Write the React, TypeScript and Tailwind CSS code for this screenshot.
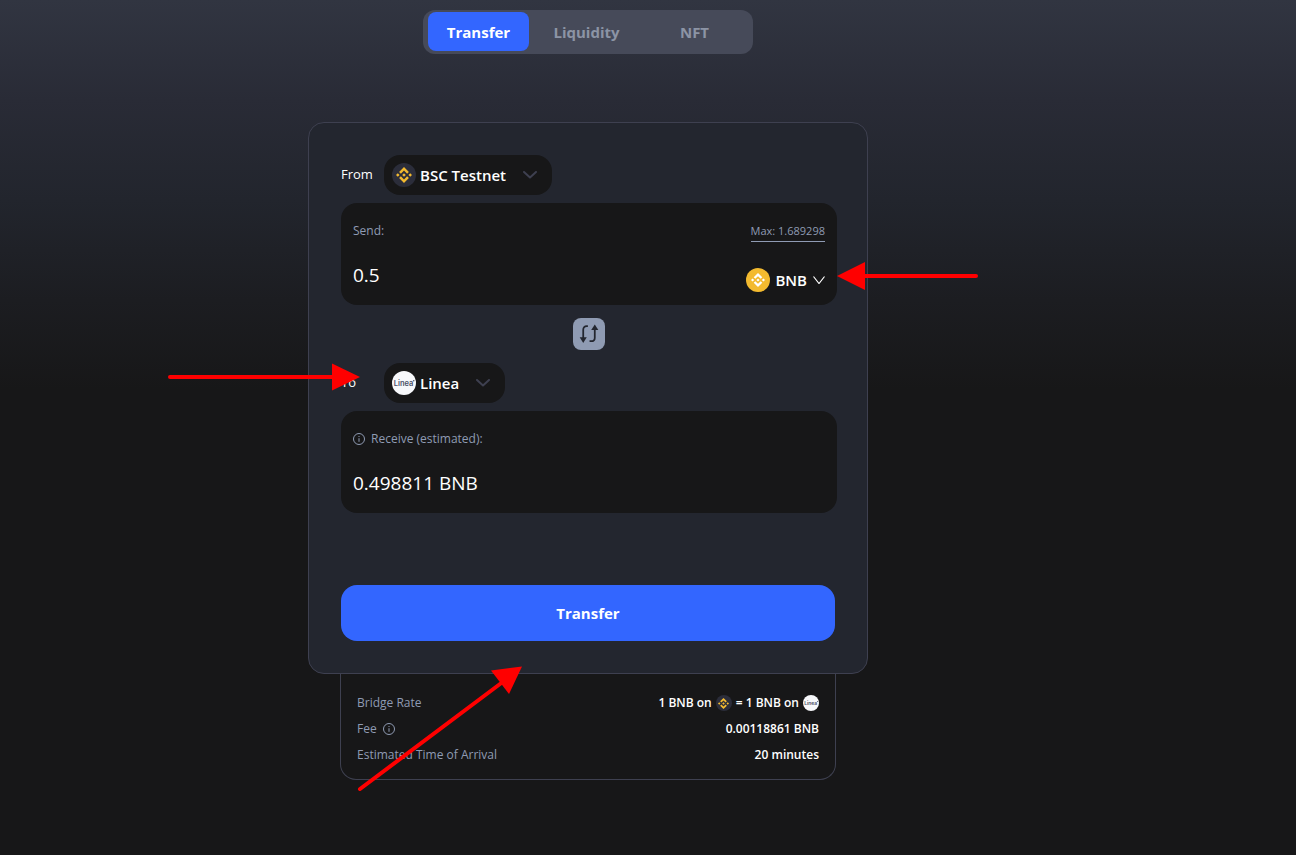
import { useState } from "react";

interface IconProps {
  className?: string;
}

const TABS = ["Transfer", "Liquidity", "NFT"];

function BnbMark({ className }: IconProps) {
  return (
    <svg className={className} viewBox="0 0 16 16" fill="currentColor" aria-hidden="true">
      <path d="M4.9 6.7 8 3.6l3.1 3.1 1.8-1.8L8 0 3.1 4.9z" />
      <path d="M4.9 9.3 8 12.4l3.1-3.1 1.8 1.8L8 16l-4.9-4.9z" />
      <path d="M0 8l1.8-1.8L3.6 8 1.8 9.8zM12.4 8l1.8-1.8L16 8l-1.8 1.8z" />
      <path d="M6.2 8 8 6.2 9.8 8 8 9.8z" />
    </svg>
  );
}

function BscLogo({ small }: { small?: boolean }) {
  return (
    <span className={`flex items-center justify-center rounded-full bg-[#2b2d3a] text-[#f3ba2f] ${small ? "size-4" : "size-6"}`}>
      <BnbMark className={small ? "size-[11px]" : "size-4"} />
    </span>
  );
}

function LineaLogo({ className }: IconProps) {
  return (
    <svg className={className} viewBox="0 0 24 24" role="img" aria-label="Linea">
      <circle cx="12" cy="12" r="12" fill="#f7f8fb" />
      <text x="11.5" y="14.5" textAnchor="middle" fontSize="7.5" fontWeight="600" fill="#4a5068" fontFamily="Inter, sans-serif">
        Linea
      </text>
      <circle cx="21.7" cy="9.8" r="0.8" fill="#4a5068" />
    </svg>
  );
}

function Chevron({ className }: IconProps) {
  return (
    <svg className={className} viewBox="0 0 14 8" fill="none" stroke="currentColor" aria-hidden="true">
      <path d="M1 1l6 5.5L13 1" strokeLinecap="round" strokeLinejoin="round" />
    </svg>
  );
}

function InfoIcon() {
  return (
    <svg className="size-3 shrink-0" viewBox="0 0 12 12" fill="none" stroke="currentColor" aria-hidden="true">
      <circle cx="6" cy="6" r="5.5" />
      <path d="M6 5.2v3.6M6 3v1" />
    </svg>
  );
}

function SwapIcon() {
  return (
    <svg className="size-5" viewBox="0 0 18 18" fill="none" stroke="currentColor" strokeWidth="1.6" aria-hidden="true">
      <path d="M8 2H7C5 2 3.800 3.200 3.800 5.200V13" />
      <path d="M.6 12h6.400L3.800 17z" fill="currentColor" stroke="none" />
      <path d="M9.500 15.500H11c2 0 3.200-1.200 3.200-3.200V5" />
      <path d="M11 5.500h6.400L14.200.500z" fill="currentColor" stroke="none" />
    </svg>
  );
}

// Red step markers drawn over the card
function Arrows() {
  return (
    <svg
      className="pointer-events-none absolute top-0 left-0 h-[552px] w-[560px] overflow-visible"
      viewBox="0 0 560 552"
      fill="#ff0000"
      stroke="#ff0000"
      strokeWidth="4"
      strokeLinecap="round"
      aria-hidden="true"
    >
      <path d="M668 154H556" />
      <path d="M529 154l28-14v28z" strokeWidth="0" />
      <path d="M-138 255H26" />
      <path d="M52 255l-28-13.500v27z" strokeWidth="0" />
      <path d="M52 667L196 559" />
      <path d="M214 544.500l-31 4 18 23.500z" strokeWidth="0" />
    </svg>
  );
}

export default function App() {
  const [tab, setTab] = useState("Transfer");
  const [amount, setAmount] = useState("0.5");

  return (
    <div className="min-h-screen bg-[#171718] bg-[linear-gradient(180deg,#313541_0px,#292b36_100px,#22252d_200px,#1c1d21_300px,#171718_390px)] pt-[10px] pr-[120px] pb-16 font-['Open_Sans',sans-serif] text-white">
      <nav className="mx-auto flex h-11 w-[330px] gap-[7px] rounded-xl bg-[#464a59] px-[5px] pt-[2px] pb-[3px]">
        {TABS.map((name) => (
          <button
            key={name}
            type="button"
            onClick={() => setTab(name)}
            className={`w-[101px] rounded-lg pt-px text-[15px] font-bold ${tab === name ? "bg-[#3366ff] text-white" : "text-[#8c94a5]"}`}
          >
            {name}
          </button>
        ))}
      </nav>

      <main className="relative mx-auto mt-[68px] w-full max-w-[560px]">
        <section className="rounded-2xl border border-[#3e4050] bg-[#23262f] py-8 pr-[30px] pl-8">
          <div className="flex items-center">
            <span className="w-[43px] text-[13px] font-medium">From</span>
            <button type="button" className="flex h-10 items-center rounded-2xl bg-[#171718] pr-[14px] pl-2 text-[15px] font-semibold">
              <BscLogo />
              <span className="mr-4 ml-1">BSC Testnet</span>
              <Chevron className="h-2 w-4 stroke-2 text-[#3e4050]" />
            </button>
          </div>

          <div className="mt-2 flex h-[102px] justify-between rounded-2xl bg-[#171718] px-3 py-4">
            <div className="flex flex-col">
              <label htmlFor="amount" className="mt-1 text-[12px] leading-4 font-medium text-[#8f9bb3]">
                Send:
              </label>
              <input
                id="amount"
                value={amount}
                onChange={(e) => setAmount(e.target.value)}
                className="mt-[22px] w-60 bg-transparent text-[19px] leading-7 outline-none"
              />
            </div>
            <div className="flex flex-col items-end">
              <button type="button" className="mt-[2px] border-b border-[#8f9bb3] text-[11px] leading-5 text-[#8f9bb3]">
                Max: 1.689298
              </button>
              <button type="button" className="mt-[26px] flex h-6 items-center text-[15px] font-semibold">
                <span className="flex size-6 items-center justify-center rounded-full bg-[#f3ba2f]">
                  <BnbMark className="size-[14px]" />
                </span>
                <span className="mr-[6px] ml-[5px]">BNB</span>
                <svg className="h-2 w-3" viewBox="0 0 12 8" fill="none" stroke="currentColor" strokeWidth="1.2" aria-hidden="true">
                  <path d="M.5.500 6 7.500 11.500.500" />
                </svg>
              </button>
            </div>
          </div>

          <button
            type="button"
            aria-label="Swap direction"
            className="mx-auto mt-[13px] flex size-8 items-center justify-center rounded-lg bg-[#8f9bb3] text-[#23262f]"
          >
            <SwapIcon />
          </button>

          <div className="mt-[13px] flex items-center">
            <span className="w-[43px] text-[13px] font-medium">To</span>
            <button type="button" className="flex h-10 items-center rounded-2xl bg-[#171718] pr-[14px] pl-2 text-[15px] font-semibold">
              <LineaLogo className="size-6" />
              <span className="mr-4 ml-1">Linea</span>
              <Chevron className="h-2 w-4 stroke-2 text-[#3e4050]" />
            </button>
          </div>

          <div className="mt-2 h-[102px] rounded-2xl bg-[#171718] px-3 py-4">
            <div className="mt-1 flex items-center gap-[6px] text-[12px] leading-4 font-medium text-[#8f9bb3]">
              <InfoIcon />
              Receive (estimated):
            </div>
            <div className="mt-[22px] text-[19px] leading-7">0.498811 BNB</div>
          </div>

          <div className="mt-[72px] pr-[2px]">
            <button type="button" className="h-14 w-full rounded-2xl bg-[#3366ff] text-[15px] font-bold">
              Transfer
            </button>
          </div>
        </section>

        <dl className="mx-8 grid grid-cols-[auto_1fr] gap-y-[10px] rounded-b-2xl border border-t-0 border-[#3e4050] px-4 pt-[21px] pb-4 text-[12px] leading-4">
          <dt className="font-medium text-[#8f9bb3]">Bridge Rate</dt>
          <dd className="flex items-center justify-end gap-1 font-semibold">
            1 BNB on <BscLogo small /> = 1 BNB on <LineaLogo className="size-4" />
          </dd>
          <dt className="flex items-center gap-[6px] font-medium text-[#8f9bb3]">
            Fee <InfoIcon />
          </dt>
          <dd className="text-right font-semibold">0.00118861 BNB</dd>
          <dt className="font-medium text-[#8f9bb3]">Estimated Time of Arrival</dt>
          <dd className="text-right font-semibold">20 minutes</dd>
        </dl>

        <Arrows />
      </main>
    </div>
  );
}
